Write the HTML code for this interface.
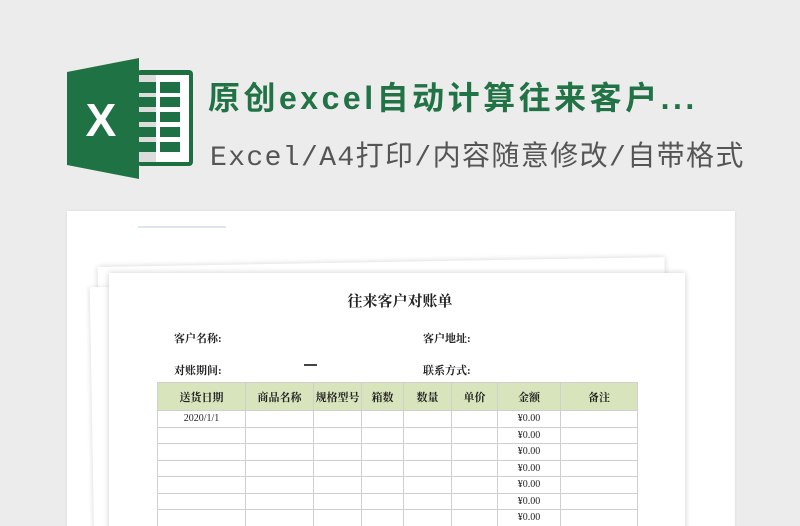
<!DOCTYPE html>
<html><head><meta charset="utf-8"><style>
*{margin:0;padding:0;box-sizing:border-box}
html,body{width:800px;height:526px;overflow:hidden}
body{background:#ececec;position:relative;font-family:"Liberation Sans","Noto Sans CJK SC",sans-serif}
.abs{position:absolute}
.t1{left:208px;top:73px;font-size:32px;font-weight:bold;color:#217346;white-space:nowrap;letter-spacing:3.5px}
.t2{left:210px;top:134px;font-size:28px;color:#555;white-space:nowrap;font-family:"Liberation Mono","Noto Sans CJK SC",monospace;letter-spacing:1.4px}
.sheet{background:#fff}
.serif{font-family:"Liberation Serif","Noto Serif CJK SC",serif;font-weight:bold;color:#222}
table{position:absolute;left:157px;top:382px;border-collapse:collapse;font-family:"Liberation Serif","Noto Serif CJK SC",serif;font-size:10px;color:#222}
td{border:1.5px solid #cfcfcf;text-align:center;height:16.5px;padding:0}
tr.h td{background:#d8e4bc;height:28px;font-weight:bold;font-size:11px}
</style></head><body>
<svg class="abs" style="left:0;top:0" width="200" height="200">
<rect x="137" y="70" width="56" height="96" rx="4" fill="#1e6f3f"/>
<rect x="140" y="75" width="49" height="87" fill="#fff"/>
<rect x="139" y="75" width="17" height="87" fill="#dcdcdc"/>
<g fill="#1e7145">
<rect x="139" y="82" width="17" height="11"/><rect x="160" y="82" width="20" height="11"/>
<rect x="139" y="97" width="17" height="10"/><rect x="160" y="97" width="20" height="10"/>
<rect x="139" y="112" width="17" height="10"/><rect x="160" y="112" width="20" height="10"/>
<rect x="139" y="127" width="17" height="10"/><rect x="160" y="127" width="20" height="10"/>
<rect x="139" y="142" width="17" height="10"/><rect x="160" y="142" width="20" height="10"/>
</g>
<polygon points="67,72 139,58 139,179 67,165" fill="#1f7244"/>
<text x="101" y="136" font-family="Liberation Sans" font-weight="bold" font-size="46" fill="#fff" text-anchor="middle">X</text>
</svg>
<div class="abs t1">原创excel自动计算往来客户...</div>
<div class="abs t2">Excel/A4打印/内容随意修改/自带格式</div>
<div class="abs sheet" style="left:67px;top:211px;width:668px;height:320px;box-shadow:0 0 3px rgba(0,0,0,.08)"></div>
<div class="abs" style="left:138px;top:226px;width:88px;height:2px;background:#dde6f0"></div>
<div class="abs sheet" style="left:100px;top:262px;width:567px;height:280px;box-shadow:0 0 6px rgba(0,0,0,.18);transform:rotate(-1deg)"></div>
<div class="abs sheet" style="left:92px;top:287px;width:30px;height:260px;box-shadow:-1px 0 4px rgba(0,0,0,.12);transform:rotate(-1deg)"></div>
<div class="abs sheet" style="left:109px;top:273px;width:576px;height:270px;box-shadow:0 0 6px rgba(0,0,0,.2)"></div>
<div class="abs serif" style="left:330px;top:290px;width:140px;text-align:center;font-size:15px">往来客户对账单</div>
<div class="abs serif" style="left:174px;top:330px;font-size:11px">客户名称:</div>
<div class="abs serif" style="left:423px;top:330px;font-size:11px">客户地址:</div>
<div class="abs serif" style="left:174px;top:362px;font-size:11px">对账期间:</div>
<div class="abs serif" style="left:423px;top:362px;font-size:11px">联系方式:</div>
<div class="abs" style="left:304px;top:364px;width:13px;height:2px;background:#444"></div>
<table>
<colgroup><col style="width:88px"><col style="width:68px"><col style="width:48px"><col style="width:42px"><col style="width:48px"><col style="width:46px"><col style="width:63px"><col style="width:77px"></colgroup>
<tr class="h"><td>送货日期</td><td>商品名称</td><td>规格型号</td><td>箱数</td><td>数量</td><td>单价</td><td>金额</td><td>备注</td></tr>
<tr><td>2020/1/1</td><td></td><td></td><td></td><td></td><td></td><td>¥0.00</td><td></td></tr>
<tr><td></td><td></td><td></td><td></td><td></td><td></td><td>¥0.00</td><td></td></tr>
<tr><td></td><td></td><td></td><td></td><td></td><td></td><td>¥0.00</td><td></td></tr>
<tr><td></td><td></td><td></td><td></td><td></td><td></td><td>¥0.00</td><td></td></tr>
<tr><td></td><td></td><td></td><td></td><td></td><td></td><td>¥0.00</td><td></td></tr>
<tr><td></td><td></td><td></td><td></td><td></td><td></td><td>¥0.00</td><td></td></tr>
<tr><td></td><td></td><td></td><td></td><td></td><td></td><td>¥0.00</td><td></td></tr>
</table>
</body></html>
